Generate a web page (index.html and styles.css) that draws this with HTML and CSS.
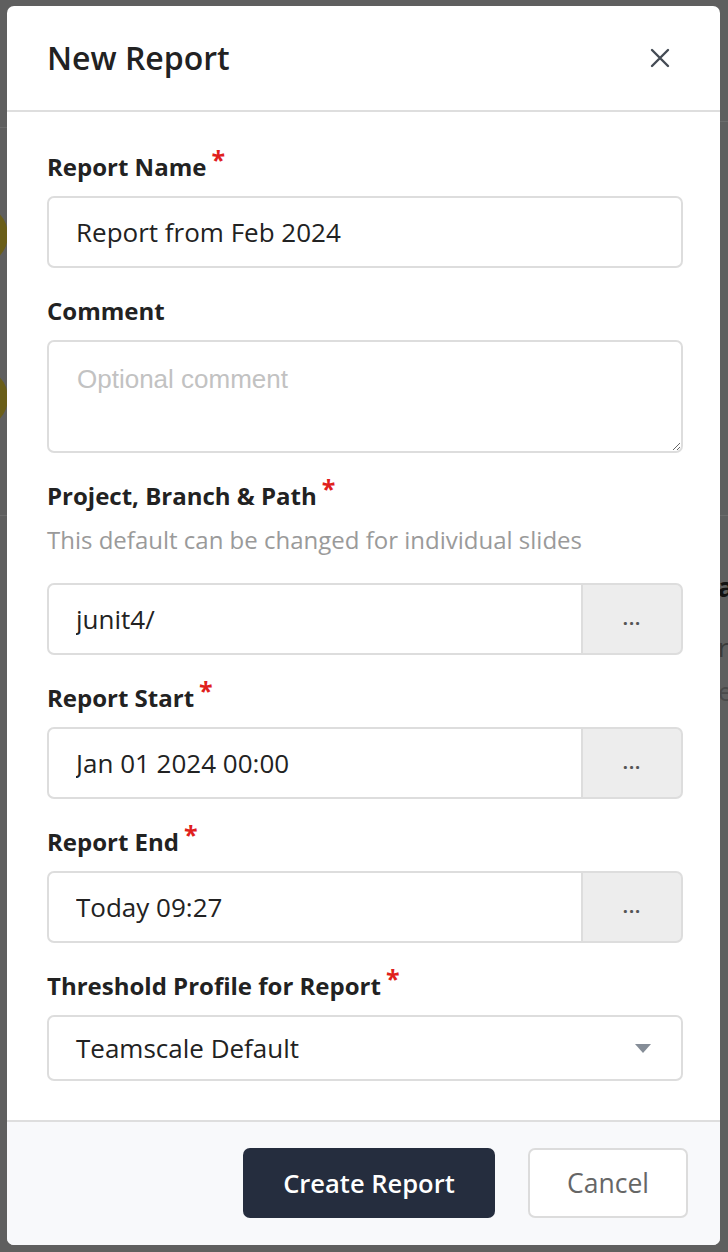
FILE: index.html
```html
<!DOCTYPE html>
<html lang="en">
<head>
    <meta charset="UTF-8">
    <meta name="viewport" content="width=device-width, initial-scale=1.0">
    <title>New Report</title>
    <link rel="stylesheet" href="styles.css">
</head>
<body>
    <div class="backdrop">
        <span class="bg-line bg-line-1"></span>
        <span class="bg-line bg-line-2"></span>
        <span class="bg-line bg-line-3"></span>
        <span class="bg-blob bg-blob-1"></span>
        <span class="bg-blob bg-blob-2"></span>
        <span class="bg-text bg-text-1">a</span>
        <span class="bg-text bg-text-2">r</span>
        <span class="bg-text bg-text-3">e</span>
    </div>

    <div class="modal">
        <div class="modal-header">
            <h1 class="modal-title">New Report</h1>
            <span class="close" id="close">
                <svg width="20" height="20" viewBox="0 0 20 20">
                    <path d="M2 2 L18 18 M18 2 L2 18" stroke="#444b54" stroke-width="2.4" stroke-linecap="round" fill="none"/>
                </svg>
            </span>
        </div>

        <div class="modal-body">
            <div class="field">
                <label class="label">Report Name<span class="req">*</span></label>
                <input class="input" type="text" value="Report from Feb 2024">
            </div>

            <div class="field">
                <label class="label">Comment</label>
                <textarea class="input textarea" placeholder="Optional comment"></textarea>
            </div>

            <div class="field">
                <label class="label">Project, Branch &amp; Path<span class="req">*</span></label>
                <div class="help">This default can be changed for individual slides</div>
                <div class="input-group">
                    <input class="input" type="text" value="junit4/">
                    <button class="more">...</button>
                </div>
            </div>

            <div class="field">
                <label class="label">Report Start<span class="req">*</span></label>
                <div class="input-group">
                    <input class="input" type="text" value="Jan 01 2024 00:00">
                    <button class="more">...</button>
                </div>
            </div>

            <div class="field">
                <label class="label">Report End<span class="req">*</span></label>
                <div class="input-group">
                    <input class="input" type="text" value="Today 09:27">
                    <button class="more">...</button>
                </div>
            </div>

            <div class="field">
                <label class="label">Threshold Profile for Report<span class="req">*</span></label>
                <div class="select">
                    <span>Teamscale Default</span>
                    <span class="caret"></span>
                </div>
            </div>
        </div>

        <div class="modal-footer">
            <button class="btn btn-primary">Create Report</button>
            <button class="btn btn-default">Cancel</button>
        </div>
    </div>
</body>
</html>
```

FILE: styles.css
```css
* {
    box-sizing: border-box;
}

body {
    font-family: "Open Sans", sans-serif;
    margin: 0;
    padding: 0;
    background-color: #5f5f5f;
    width: 728px;
    height: 1252px;
    overflow: hidden;
    position: relative;
}

/* dimmed page behind the dialog */
.backdrop {
    position: absolute;
    top: 0;
    left: 0;
    width: 100%;
    height: 100%;
}

.bg-line {
    position: absolute;
    height: 1px;
    background: #6c6c6c;
}

.bg-line-1 { top: 127px; left: 0; width: 8px; }
.bg-line-2 { top: 121px; left: 720px; width: 8px; }
.bg-line-3 { top: 515px; left: 0; width: 728px; }

.bg-blob {
    position: absolute;
    width: 60px;
    height: 60px;
    border-radius: 50%;
    background: #6a5e19;
}

.bg-blob-1 { top: 205px; left: -52px; }
.bg-blob-2 { top: 368px; left: -52px; }

.bg-text {
    position: absolute;
    left: 718px;
    font-size: 26px;
    line-height: 30px;
}

.bg-text-1 { top: 572px; color: #111; font-weight: 700; }
.bg-text-2 { top: 632px; color: #3a3a3a; }
.bg-text-3 { top: 676px; color: #4a4a4a; }

.modal {
    position: absolute;
    top: 6px;
    left: 7px;
    width: 713px;
    height: 1239px;
    background: #fff;
    border-radius: 7px;
    display: flex;
    flex-direction: column;
    overflow: hidden;
}

.modal-header {
    height: 106px;
    flex-shrink: 0;
    display: flex;
    align-items: center;
    justify-content: space-between;
    padding: 0 50px 0 40px;
    border-bottom: 2px solid #dedede;
}

.modal-title {
    margin: 0;
    font-size: 32px;
    font-weight: 600;
    color: #222;
    padding-bottom: 2px;
}

.close {
    display: flex;
    cursor: pointer;
}

.modal-body {
    flex: 1;
    padding: 40px 37px 0 40px;
}

.field {
    margin-bottom: 28px;
}

.label {
    display: block;
    font-size: 24px;
    font-weight: 700;
    line-height: 30px;
    height: 30px;
    color: #222;
    margin-bottom: 14px;
}

.req {
    color: #e0201c;
    font-size: 25px;
    line-height: 1;
    margin-left: 5px;
    position: relative;
    top: -7px;
}

.help {
    font-size: 24px;
    line-height: 30px;
    color: #9a9a9a;
    margin: 0 0 28px;
}

.input {
    display: block;
    width: 100%;
    height: 72px;
    border: 2px solid #dddddd;
    border-radius: 7px;
    padding: 0 27px;
    font-family: "Open Sans", sans-serif;
    font-size: 26px;
    color: #222;
    background: #fff;
    outline: none;
}

.textarea {
    height: 113px;
    padding: 22px 28px;
    resize: vertical;
    font-family: "Liberation Sans", Arial, sans-serif;
    font-size: 26px;
}

.textarea::placeholder {
    color: #c2c2c2;
}

.input-group {
    display: flex;
    height: 72px;
}

.input-group .input {
    flex: 1;
    border-radius: 7px 0 0 7px;
}

.more {
    width: 100px;
    height: 72px;
    border: 2px solid #dddddd;
    border-left: none;
    border-radius: 0 7px 7px 0;
    background: #ededed;
    color: #555;
    font-family: "Open Sans", sans-serif;
    font-size: 18px;
    font-weight: 700;
    letter-spacing: 1px;
    padding: 0 0 2px;
    cursor: pointer;
}

.select {
    height: 66px;
    border: 2px solid #dddddd;
    border-radius: 7px;
    display: flex;
    align-items: center;
    justify-content: space-between;
    padding: 0 30px 0 27px;
    font-size: 26px;
    color: #222;
}

.caret {
    width: 0;
    height: 0;
    border-left: 8px solid transparent;
    border-right: 8px solid transparent;
    border-top: 9px solid #858d97;
}

.modal-footer {
    height: 125px;
    flex-shrink: 0;
    border-top: 2px solid #dedede;
    background: #f8f9fb;
    display: flex;
    align-items: center;
    justify-content: flex-end;
    gap: 33px;
    padding: 0 32px 2px 0;
}

.btn {
    height: 70px;
    border-radius: 7px;
    font-family: "Open Sans", sans-serif;
    font-size: 26.5px;
    cursor: pointer;
}

.btn-primary {
    width: 252px;
    background: #252d3e;
    color: #fff;
    border: none;
    font-size: 25.5px;
    font-weight: 600;
}

.btn-default {
    width: 160px;
    background: #fff;
    color: #666;
    border: 2px solid #dcdcdc;
}
```
